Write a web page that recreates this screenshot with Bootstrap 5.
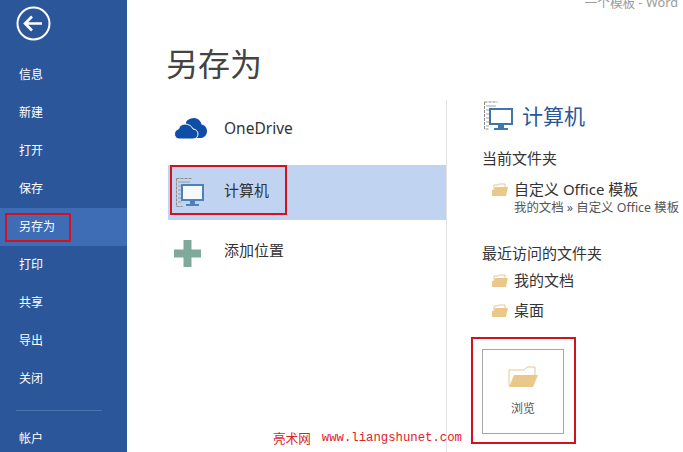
<!DOCTYPE html>
<html lang="zh-CN">
<head>
  <meta charset="UTF-8">
  <title>另存为</title>
  <link href="https://cdn.jsdelivr.net/npm/bootstrap@5.3.0/dist/css/bootstrap.min.css" rel="stylesheet">
  <style>
    html, body { width: 683px; height: 452px; overflow: hidden; }
    body { font-family: "Noto Sans", "Noto Sans CJK SC", sans-serif; color: #333; background: #fff; }
    .side { width: 127px; height: 452px; background: #2b579a; color: #fff; font-size: 12px; flex-shrink: 0; }
    .back-wrap { height: 56px; padding: 6px 0 0 16px; }
    .side-item { height: 38px; padding-left: 19px; line-height: 38px; position: relative; }
    .side-item.on { background: #3e6db5; }
    .side-item.tail { height: 24px; line-height: 24px; }
    .side-rule { height: 1px; width: 86px; background: #4a74ae; margin: 12px 0 16px 16px; }
    .mark-box { position: absolute; border: 2px solid #d0131f; pointer-events: none; }
    .mark-side { left: 5px; top: 5px; width: 66px; height: 29px; }
    .main { flex: 1; min-width: 0; position: relative; }
    .app-title { height: 9px; overflow: hidden; text-align: right; padding-right: 5px; font-size: 12.7px; line-height: 14px; color: #9a9a9a; }
    .app-title span { display: block; margin-top: -5px; }
    .page-title { font-size: 32px; font-weight: 400; line-height: 40px; margin: 35px 0 0 39px; color: #444; }
    .cols { margin-top: 16px; }
    .places { width: 320px; height: 352px; border-right: 1px solid #e1e1e1; padding: 2px 0 0 41px; }
    .place { height: 56px; display: flex; align-items: center; font-size: 15px; position: relative; }
    .place.first { height: 63px; padding-bottom: 10px; font-size: 15.5px; }
    .place.on { background: #c0d4f2; height: 55px; padding-bottom: 5px; }
    .place.last { height: 61px; }
    .place-icon { width: 56px; padding-left: 6px; display: flex; flex-shrink: 0; }
    .place.on .place-icon { padding-left: 8px; margin-top: 5px; }
    .place.last .place-icon { margin-top: 5px; }
    .mark-place { left: 2px; top: 0; width: 117px; height: 50px; }
    .detail { flex: 1; padding-left: 35px; min-width: 0; white-space: nowrap; overflow: hidden; }
    .detail-head { color: #2b579a; font-size: 21px; line-height: 30px; height: 31px; gap: 9px; }
    .sect { font-size: 15px; line-height: 20px; }
    .sect-cur { margin-top: 17px; margin-bottom: 11px; }
    .sect-recent { margin-top: 28px; margin-bottom: 7px; }
    .folder-row { display: flex; gap: 6px; padding-left: 10px; font-size: 15px; line-height: 20px; }
    .folder-row svg { flex-shrink: 0; margin-top: 4px; }
    .folder-row.next { margin-top: 10px; }
    .folder-sub { font-size: 12.4px; line-height: 14px; margin-top: 2px; color: #555; }
    .browse-wrap { position: relative; width: 82px; height: 85px; border: 1px solid #a6a6a6; margin-top: 29px; font-size: 12px; line-height: 18px; color: #555; }
    .browse-label { margin-top: 12px; }
    .mark-browse { left: -12px; top: -13px; width: 105px; height: 107px; }
    .watermark { position: absolute; left: 146px; bottom: 7px; gap: 11px; color: #e0202a; font-family: "Liberation Mono", "Noto Sans CJK SC", monospace; font-size: 12.3px; line-height: 14px; white-space: nowrap; }
    .watermark-name { font-family: "Noto Sans CJK SC", sans-serif; font-size: 12.6px; }
  </style>
</head>
<body>
  <div class="d-flex">
    <nav class="side">
      <div class="back-wrap">
        <svg width="35" height="35" viewBox="0 0 35 35" fill="none" stroke="#fff"><circle cx="17.5" cy="17.5" r="16" stroke-width="2"/><path d="M9 17.5h17M16 10.500l-7 7 7 7" stroke-width="2.6"/></svg>
      </div>
      <div class="side-item">信息</div>
      <div class="side-item">新建</div>
      <div class="side-item">打开</div>
      <div class="side-item">保存</div>
      <div class="side-item on">另存为<span class="mark-box mark-side"></span></div>
      <div class="side-item">打印</div>
      <div class="side-item">共享</div>
      <div class="side-item">导出</div>
      <div class="side-item">关闭</div>
      <div class="side-rule"></div>
      <div class="side-item tail">帐户</div>
    </nav>
    <main class="main">
      <div class="app-title"><span>一个模板 - Word</span></div>
      <h1 class="page-title">另存为</h1>
      <div class="d-flex cols">
        <div class="places">
          <div class="place first">
            <span class="place-icon">
              <svg width="33" height="21" viewBox="0 0 33 21"><path fill="#0f4ea6" d="M12 4C14 1 17 0 20 0c4 0 7 3 7.500 6.500C30.500 7 33 9.500 33 13c0 4-3 7-6 7H12z"/><path fill="#0f4ea6" stroke="#fff" d="M5 21C2 21 .5 18 .5 16c0-3 2-4.500 4-5C5.500 7.500 8 6 11 6c4 0 7 2.500 8 5 3 0 5 2.500 5 5s-1.500 5-5 5z"/></svg>
            </span>
            OneDrive
          </div>
          <div class="place on">
            <span class="mark-box mark-place"></span>
            <span class="place-icon">
              <svg width="28" height="30" viewBox="0 0 28 30"><path fill="none" stroke="#8b8b8b" stroke-dasharray="3 1" d="M.5 .5h15M.5 .5v28h6"/><path stroke="#9a9a9a" d="M2 4h12M2 8h3M2 12h3M2 16h3M2 20h3M2 24h3"/><path fill="#f5f8fd" stroke="#4d82b8" stroke-width="2" d="M6 7h21v15H6z"/><path fill="#4d82b8" d="M14 23h5v3h-5zM10 26h13v2H10z"/></svg>
            </span>
            计算机
          </div>
          <div class="place last">
            <span class="place-icon">
              <svg width="27" height="27" viewBox="0 0 27 27"><path fill="#7fa99b" d="M9.500 0h8v9.500H27v8h-9.500V27h-8v-9.500H0v-8h9.500z"/></svg>
            </span>
            添加位置
          </div>
        </div>
        <div class="detail">
          <div class="d-flex align-items-center detail-head">
            <svg width="31" height="30" viewBox="0 0 31 30"><path fill="none" stroke="#8b8b8b" stroke-dasharray="3 1" d="M2.500 1h13M2.500 1v27h5"/><path stroke="#a5a5a5" d="M4 5h10M4 9h3M4 13h3M4 17h3M4 21h3M4 25h3"/><path fill="#fff" stroke="#3f76ad" stroke-width="2" d="M8 8h22v15H8z"/><path fill="#3f76ad" d="M16 24h6v3h-6zM12 27h14v2H12z"/></svg>
            计算机
          </div>
          <div class="sect sect-cur">当前文件夹</div>
          <div class="folder-row">
            <svg width="16" height="13" viewBox="0 0 16 13"><path fill="#fff" stroke="#e8c98f" d="M2 8V2h4l1-1h6v5"/><path fill="#e9c88a" d="M3 4h13l-2 9H0V7h2z"/></svg>
            <div>
              <div>自定义 Office 模板</div>
              <div class="folder-sub">我的文档 » 自定义 Office 模板</div>
            </div>
          </div>
          <div class="sect sect-recent">最近访问的文件夹</div>
          <div class="folder-row">
            <svg width="16" height="13" viewBox="0 0 16 13"><path fill="#fff" stroke="#e8c98f" d="M2 8V2h4l1-1h6v5"/><path fill="#e9c88a" d="M3 4h13l-2 9H0V7h2z"/></svg>
            我的文档
          </div>
          <div class="folder-row next">
            <svg width="16" height="13" viewBox="0 0 16 13"><path fill="#fff" stroke="#e8c98f" d="M2 8V2h4l1-1h6v5"/><path fill="#e9c88a" d="M3 4h13l-2 9H0V7h2z"/></svg>
            桌面
          </div>
          <div class="browse-wrap d-flex flex-column align-items-center">
            <span class="mark-box mark-browse"></span>
            <svg class="mt-3" width="30" height="22" viewBox="0 0 30 22"><path fill="#fff" stroke="#e8c98f" d="M1 20V4h15l3-3h8v10"/><path fill="#e9c88a" d="M6 9h24l-5 12H1z"/></svg>
            <div class="browse-label">浏览</div>
          </div>
        </div>
      </div>
      <div class="watermark d-flex align-items-center"><span class="watermark-name">亮术网</span><span>www.liangshunet.com</span></div>
    </main>
  </div>
  <script src="https://cdn.jsdelivr.net/npm/bootstrap@5.3.0/dist/js/bootstrap.bundle.min.js"></script>
</body>
</html>
